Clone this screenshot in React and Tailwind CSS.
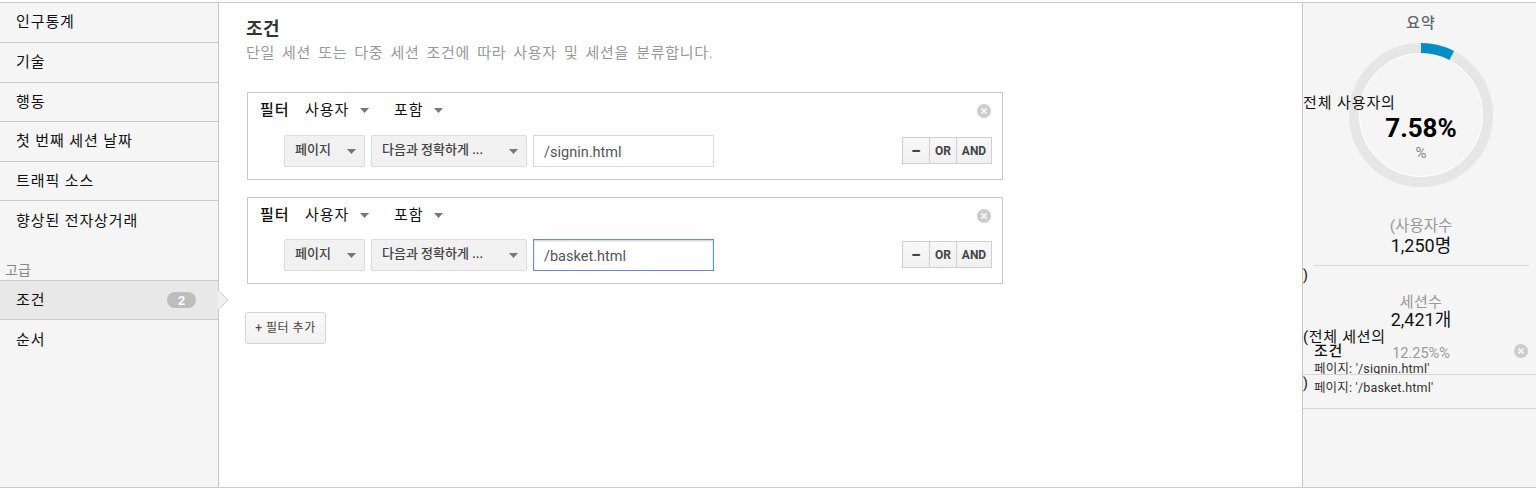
const font = { fontFamily: '"Roboto","Noto Sans CJK KR",sans-serif' };

function Caret({ className = "" }) {
  return (
    <svg width="9" height="5" viewBox="0 0 9 5" className={className}>
      <path d="M0 0H9L4.5 5Z" fill="#777" />
    </svg>
  );
}

function CloseDot({ className = "" }) {
  return (
    <svg width="14" height="14" viewBox="0 0 14 14" className={className}>
      <circle cx="7" cy="7" r="7" fill="#ccc" />
      <path d="M4.4 4.4L9.6 9.6M9.6 4.4L4.4 9.6" stroke="#f4f4f4" strokeWidth="1.8" />
    </svg>
  );
}

function SideRow({ label, active, badge, last, low }) {
  return (
    <div className={`relative flex h-[39.6px] items-center pl-4 text-[15px] tracking-[0.9px] text-[#111] ${last ? "" : "border-b border-[#cbcbcb]"} ${active ? "bg-[#e8e8e8] border-t" : ""} ${low ? "pt-[2px]" : ""}`}>
      <span>{label}</span>
      {badge && (
        <span className="absolute left-[167px] top-[11px] flex h-4 w-[29px] items-center justify-center rounded-full bg-[#bdbdbd] text-[13px] font-bold tracking-normal text-white">{badge}</span>
      )}
    </div>
  );
}

function Filter({ value, focus, last }) {
  return (
    <div className={`ml-px flex w-[756px] flex-col border border-[#c8c8c8] bg-white pl-[12px] ${last ? "h-[87px]" : "mb-[17px] h-[88px]"}`}>
      <div className="flex h-[32px] items-center whitespace-nowrap pt-[3px] text-[15px] tracking-[0.9px] text-[#111]">
        <span className="w-[45px] font-medium">필터</span>
        <span className="w-[46px]">사용자</span>
        <Caret className="ml-[9px]" />
        <span className="ml-[25px] w-[29px]">포함</span>
        <Caret className="ml-[11px]" />
        <CloseDot className="ml-[534px]" />
      </div>
      <div className={`flex h-[32px] items-start pl-[24px] ${last ? "mt-[9px]" : "mt-[10px]"}`}>
        <div className="flex h-[32px] w-[81px] items-center rounded-[2px] border border-[#dcdcdc] bg-[#f1f1f1] pl-[10px] text-[13px] font-medium text-[#444]">
          <span className="mb-[3px] w-[36px]">페이지</span>
          <Caret className="ml-[16px]" />
        </div>
        <div className="ml-[6px] flex h-[32px] w-[156px] items-center rounded-[2px] border border-[#dcdcdc] bg-[#f1f1f1] pl-[10px] text-[13px] font-medium text-[#444]">
          <span className="mb-[3px] w-[127px]">다음과 정확하게 ...</span>
          <Caret />
        </div>
        <div className={`ml-[6px] flex h-[32px] w-[181px] items-center border bg-white pl-[10px] pt-[3px] text-[14.5px] text-[#555] ${focus ? "border-[#5f8fdc] shadow-[inset_0_1px_2px_rgba(0,0,0,0.2)]" : "border-[#d9d9d9]"}`}>
          {value}
        </div>
        <div className="ml-[188px] mt-[2px] flex h-[27px] w-[90px] border border-[#d0d0d0] bg-gradient-to-b from-[#f8f8f8] to-[#f0f0f0] text-[12px] font-bold text-[#444]">
          <span className="flex w-[26px] items-center justify-center text-[18px]">−</span>
          <span className="flex w-[27px] items-center justify-center border-l border-[#d0d0d0]">OR</span>
          <span className="flex flex-1 items-center justify-center border-l border-[#d0d0d0]">AND</span>
        </div>
      </div>
    </div>
  );
}

function Donut() {
  const r = 67;
  const c = 72;
  const a = (27.3 * Math.PI) / 180;
  const x = c + r * Math.sin(a);
  const y = c - r * Math.cos(a);
  return (
    <svg width="144" height="144" viewBox="0 0 144 144">
      <circle cx={c} cy={c} r={r} fill="none" stroke="#e6e6e6" strokeWidth="10" />
      <circle cx={c} cy={c} r={r - 5.5} fill="none" stroke="#fff" strokeWidth="1" />
      <path d={`M${c} ${c - r}A${r} ${r} 0 0 1 ${x} ${y}`} fill="none" stroke="#058dc7" strokeWidth="10" />
    </svg>
  );
}

export default function App() {
  return (
    <div style={font} className="h-[488px] w-[1536px] overflow-hidden bg-white pt-[2px]">
      <div className="flex h-[486px] border-y border-[#cbcbcb]">
        <aside className="relative w-[219px] shrink-0 border-r border-[#c8c8c8] bg-[#f5f5f5] pt-[0.4px]">
          <SideRow label="인구통계" />
          <SideRow label="기술" />
          <SideRow label="행동" />
          <SideRow label="첫 번째 세션 날짜" />
          <SideRow label="트래픽 소스" />
          <SideRow label="향상된 전자상거래" last />
          <div className="flex h-[39.4px] items-end pl-[5px] text-[14px] leading-[20px] text-[#888]">고급</div>
          <SideRow label="조건" active badge="2" />
          <SideRow label="순서" last low />
          <svg width="12" height="22" viewBox="0 0 12 22" className="absolute left-[218px] top-[286px]">
            <path d="M0 1L10 11L0 21Z" fill="#f0f0f0" />
            <path d="M0 1L10 11L0 21" fill="none" stroke="#d0d0d0" />
          </svg>
        </aside>

        <main className="min-w-0 flex-1 pl-[27px]">
          <h2 className="mt-[14px] text-[18px] font-bold leading-[24px] tracking-[0.5px] text-[#333]">조건</h2>
          <p className="mt-[1px] text-[15px] leading-[22px] tracking-[0.7px] [word-spacing:2.7px] text-[#999]">단일 세션 또는 다중 세션 조건에 따라 사용자 및 세션을 분류합니다.</p>
          <div className="mt-[28px]">
            <Filter value="/signin.html" />
            <Filter value="/basket.html" focus last />
          </div>
          <button className="-ml-px mt-[28px] flex h-[32px] w-[81px] items-center justify-center rounded-[3px] border border-[#d5d5d5] bg-gradient-to-b from-[#fafafa] to-[#f1f1f1] text-[12px] tracking-[0.5px] text-[#444]">+ 필터 추가</button>
        </main>

        <aside className="relative w-[234px] shrink-0 border-l border-[#c8c8c8] bg-[#f5f5f5]">
          <div className="relative flex flex-col items-center pl-[3px]">
            <div className="mt-[10px] h-[20px] text-[15px] font-medium leading-[20px] tracking-[0.9px] text-[#666]">요약</div>
            <div className="relative mt-[10px] h-[144px] w-[144px]">
              <Donut />
              <div className="absolute inset-x-0 top-[67px] text-center text-[26px] font-bold leading-[36px] text-black">7.58%</div>
              <div className="absolute inset-x-0 top-[100px] text-center text-[15px] leading-[20px] text-[#888]">%</div>
            </div>
            <span className="absolute left-0 top-[90px] text-[15px] leading-[20px] tracking-[0.9px] text-[#111]">전체 사용자의</span>
          </div>
          <div className="mt-[29px] pl-[3px] text-center">
            <div className="text-[15.5px] leading-[20px] text-[#999]">(사용자수</div>
            <div className="text-[18px] leading-[19px] text-[#111]">1,250명</div>
          </div>
          <div className="ml-[11px] mt-[10px] w-[215px] border-t border-[#d5d5d5]" />
          <div className="h-[17px] text-[14px] leading-[18px] text-[#111]">)</div>
          <div className="mt-[9px] pl-[3px] text-center">
            <div className="text-[15px] leading-[20px] tracking-[0.3px] text-[#999]">세션수</div>
            <div className="text-[18px] leading-[16px] text-[#111]">2,421개</div>
          </div>
          <div className="mt-[1px] text-[15px] leading-[17px] tracking-[0.7px] text-[#111]">(전체 세션의</div>
          <div className="relative">
            <div className="-mt-[2px] pl-[11px] text-[15px] font-medium leading-[14px] tracking-[0.7px] text-[#111]">조건</div>
            <div className="mt-[3px] h-[13px] overflow-hidden pl-[11px] text-[12.5px] leading-[16px] tracking-[0.2px] text-[#333]">페이지: '/signin.html'</div>
            <div className="absolute inset-x-0 top-[1px] pl-[3px] text-center text-[14.5px] leading-[17px] text-[#999]">12.25%%</div>
            <CloseDot className="absolute left-[211px] top-0" />
          </div>
          <div className="flex h-[35px] border-y border-[#d5d5d5]">
            <span className="text-[14px] leading-[16px] text-[#111]">)</span>
            <span className="ml-[6px] mt-[5px] text-[12.5px] leading-[16px] tracking-[0.2px] text-[#333]">페이지: '/basket.html'</span>
          </div>
        </aside>
      </div>
    </div>
  );
}
